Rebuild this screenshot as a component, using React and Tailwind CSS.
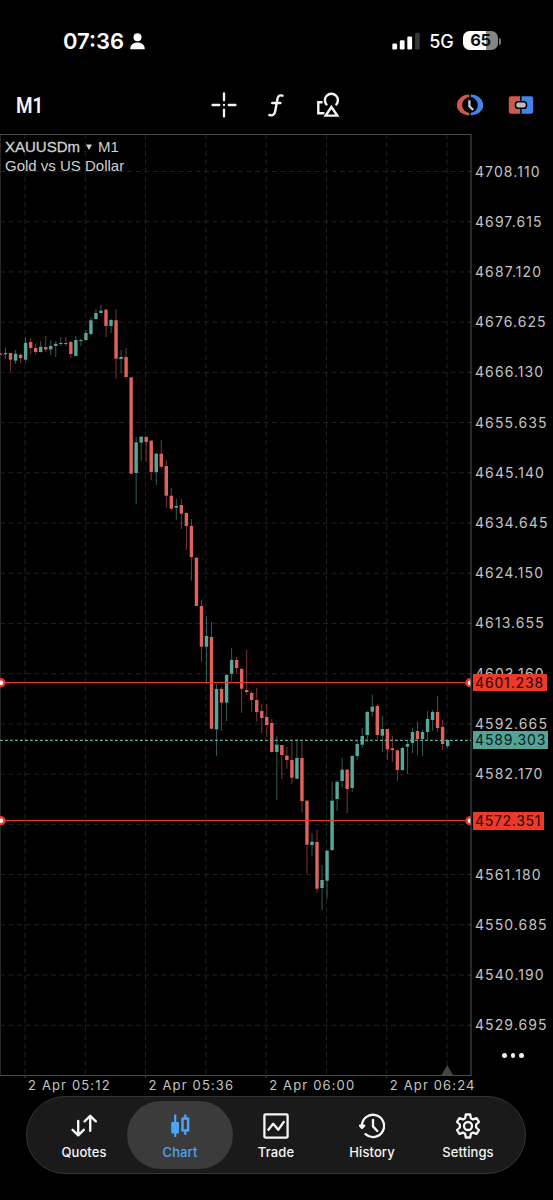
import React from "react";

// Each candle: [body top, body bottom, wick top, wick bottom, rising]
const CANDLES = [
  [353.6, 354.6, 353, 355, 0], [353, 354.2, 347.5, 359, 1], [353, 359.7, 353, 371.3, 0], [353.8, 360.7, 350, 364, 1],
  [354.7, 358, 353.5, 363, 0], [342.8, 359.7, 337, 362.6, 1], [342, 348, 338, 354, 0], [348, 352, 343.5, 354.6, 0],
  [346.8, 352, 341, 352.6, 1], [347, 349.5, 336, 351.7, 0], [346, 349.4, 340, 355, 1], [343.8, 346, 341.5, 357, 1],
  [343, 344, 337, 346, 1], [343, 344, 337, 346, 0], [342, 354, 341, 358, 0], [340, 356, 336, 356, 1],
  [340, 341, 338.6, 346, 1], [333, 340, 330, 340.6, 1], [320.3, 334, 317, 335, 1], [313, 319, 309, 320, 1],
  [310.7, 313, 304.7, 313, 1], [309.7, 326, 309, 337, 0], [320, 326, 319, 333, 1], [320.3, 358.7, 309, 379, 0],
  [357, 359, 350, 372.7, 1], [357, 377, 348, 378.7, 0], [377.3, 473.7, 377.3, 473.7, 0], [442.3, 473, 437, 504, 1],
  [436.7, 442.7, 436, 460.7, 1], [437, 442, 436, 461, 0], [440.7, 472, 440, 480, 0], [453.7, 472, 453, 485, 1],
  [453.7, 466.7, 440, 468, 0], [466, 495.7, 460, 507.7, 0], [495.7, 508.7, 488, 510.7, 0], [506, 507.7, 498.7, 520, 1],
  [505, 513.7, 499, 529, 0], [513, 526, 511.7, 550, 0], [526, 557, 519, 580.7, 0], [557.7, 606, 557.7, 606, 0],
  [606, 646.7, 600, 661.7, 0], [636, 646.7, 616, 684, 1], [637, 728.7, 622, 729, 0], [689, 729.3, 684, 755.7, 1],
  [689, 702.7, 687, 730.7, 0], [675, 702.7, 674, 721, 1], [660, 673.7, 647.7, 681.7, 1], [660, 668, 657, 674, 0],
  [669, 688.7, 668, 713, 0], [690, 692, 650, 694.7, 0], [693, 700, 691, 712, 0], [700, 712, 688, 721.7, 0],
  [711, 718, 704, 733, 0], [717, 725, 704, 737, 0], [723, 752, 718.7, 752.7, 0], [744.7, 752, 735.7, 800, 1],
  [745, 755, 745, 779, 0], [755.7, 760, 747, 768.7, 0], [760, 777.7, 740.7, 783.7, 0], [758, 778.7, 739, 779, 1],
  [758, 801, 740, 812.7, 0], [800.7, 844.7, 800, 873.7, 0], [841.7, 845, 833, 855.7, 1], [842, 888.7, 830, 892.7, 0],
  [880, 888, 865, 910, 1], [850.7, 880.7, 850, 899, 1], [800.7, 850, 781.7, 851, 1], [782, 799, 780, 811, 1],
  [769.7, 781, 757.7, 787, 1], [769.7, 789, 769, 813, 0], [756, 788, 755, 791.7, 1], [744, 756, 740, 759.7, 1],
  [736, 744.7, 728, 748, 1], [712, 735, 711, 742, 1], [706.7, 711.7, 694.7, 716.7, 1], [706, 735, 704, 739, 0],
  [729, 735.7, 715.7, 752, 1], [729, 749.3, 729, 760, 0], [748.3, 750, 736, 762, 0], [750.3, 770, 750, 780.7, 0],
  [748, 770, 747, 770.7, 1], [744, 746.7, 741, 774, 1], [732, 743, 727.7, 753, 1], [731, 739, 721.7, 755, 0],
  [732, 739, 730, 756, 1], [719, 732, 711, 740, 1], [712, 720, 710, 730.7, 1], [712, 728, 696, 732, 0],
  [727, 744, 719.7, 750, 0], [740, 746, 739.5, 748, 1],
];

const PRICES = [
  "4708.110", "4697.615", "4687.120", "4676.625", "4666.130", "4655.635", "4645.140", "4634.645", "4624.150",
  "4613.655", "4603.160", "4592.665", "4582.170", "", "4561.180", "4550.685", "4540.190", "4529.695",
];
const TIMES = ["2 Apr 05:12", "2 Apr 05:36", "2 Apr 06:00", "2 Apr 06:24"];
const GRID_X = Array.from({ length: 8 }, (_, i) => 25 + i * 60.29);
const GRID_Y = Array.from({ length: 18 }, (_, i) => 171.5 + i * 50.22);

function StatusBar() {
  return (
    <div className="flex h-[82px] shrink-0 items-center justify-between pr-[52px] pl-[63px]">
      <div className="flex items-center gap-[6px]">
        <span className="text-[22px] leading-none font-semibold">07:36</span>
        <svg width="15" height="17" viewBox="0 0 15 17" fill="white">
          <circle cx="7.5" cy="4.2" r="4" />
          <path d="M0.3 16.2C0 12.3 3.2 9.6 7.5 9.6S15 12.3 14.7 16.2Z" />
        </svg>
      </div>
      <div className="flex items-center">
        <svg className="-mt-px" width="28" height="18" viewBox="0 0 28 18" fill="white">
          <rect x="0.3" y="11.5" width="4.8" height="6" rx="1.3" />
          <rect x="7.8" y="8.2" width="4.8" height="9.3" rx="1.3" />
          <rect x="15.3" y="4.5" width="4.8" height="13" rx="1.3" />
          <rect x="23" y="0.8" width="4.8" height="16.7" rx="1.3" fill="#363636" />
        </svg>
        <div className="flex w-[43px] justify-center pt-px text-[18px] leading-none font-medium">5G</div>
        <div className="-mt-px flex h-[19px] w-[35px] items-center justify-center rounded-[6.5px] bg-linear-to-r from-white from-65% to-[#858585] to-65% text-[16.5px] leading-none font-bold tracking-[-0.3px] text-[#111]">
          65
        </div>
        <div className="ml-px h-[7px] w-[2px] rounded-r-full bg-[#777]" />
      </div>
    </div>
  );
}

function Toolbar() {
  return (
    <div className="flex h-[52px] shrink-0 items-start pr-[19px] pl-[16px]">
      <div className="mt-[12px] w-[195px] shrink-0 origin-left scale-x-[0.88] font-['Roboto',sans-serif] text-[21.5px] leading-[24px] font-semibold text-[#f4f4f4]">M1</div>
      <div className="mt-[10px] flex items-center">
        <svg width="26" height="26" viewBox="0 0 26 26" stroke="#f4f4f4" strokeWidth="2.3" strokeLinecap="round">
          <path d="M13 1.5V8.3M13 17.7V24.5M1.5 13H8.3M17.7 13H24.5M13 12.9V13.1" />
        </svg>
        <svg className="ml-[31px]" width="16" height="26" viewBox="0 0 16 26" fill="none" stroke="#f4f4f4" strokeWidth="2.4" strokeLinecap="round">
          <path d="M14.5 3.7C11.7 2.8 10.1 3.8 9.5 6.8L7.2 19.2C6.5 22.8 4.6 24 1.4 23M4.2 11H12.4" />
        </svg>
        <svg className="ml-[32px]" width="25" height="26" viewBox="0 0 25 26" fill="none" stroke="#f4f4f4" strokeWidth="2.4">
          <path d="M6.6 10.2H2.3V21.3H8.4" />
          <path d="M11.2 13.2A6.5 6.5 0 1 1 19.6 13.2" />
          <path d="M15.4 15L21.3 23.6H9.7Z" />
        </svg>
      </div>
      <div className="mt-[12px] ml-auto flex items-center gap-[25px]">
        <svg width="26" height="22" viewBox="0 0 26 22" fill="none">
          <path d="M12.3 0.6A12.6 10.4 0 0 0 12.3 21.4Z" fill="#cb5a4c" />
          <path d="M13.7 0.6A12.6 10.4 0 0 1 13.7 21.4Z" fill="#4285ea" />
          <circle cx="13" cy="11" r="7.9" fill="#000" />
          <path d="M12.4 6.2V12.2L16.2 16" stroke="#c8d0d2" strokeWidth="2.3" />
        </svg>
        <svg width="26" height="20" viewBox="0 0 26 20">
          <path d="M12.2 1.2H3Q0.8 1.2 0.8 3.4V16.6Q0.8 18.8 3 18.8H12.2Z" fill="#cb5a4c" />
          <path d="M13.6 1.2H23Q25.2 1.2 25.2 3.4V16.6Q25.2 18.8 23 18.8H13.6Z" fill="#4285ea" />
          <rect x="7.5" y="6.8" width="11" height="6.4" rx="2.8" fill="#b7bec2" stroke="#050505" strokeWidth="1.6" />
        </svg>
      </div>
    </div>
  );
}

function LevelLine({ y }) {
  return (
    <g clipPath="url(#plot-area)">
      <path d={`M0 ${y}H471`} stroke="#e4382a" strokeWidth="1.3" />
      <circle cx="1" cy={y} r="3.5" fill="white" stroke="#e4382a" strokeWidth="2.4" />
      <circle cx="470" cy={y} r="3.5" fill="white" stroke="#e4382a" strokeWidth="2.4" />
    </g>
  );
}

function Plot() {
  return (
    <svg className="block h-[948px] w-[472px] shrink-0" viewBox="0 134 472 948">
      <clipPath id="plot-area"><rect x="0" y="134" width="470.4" height="942" /></clipPath>
      <g stroke="#1f2225" strokeWidth="1" strokeDasharray="5 3.5">
        {GRID_Y.map((y) => <path key={y} d={`M0 ${y}H471`} />)}
        {GRID_X.map((x) => <path key={x} d={`M${x} 134V1075`} />)}
      </g>
      <path d="M0.5 134V1075" stroke="#242627" />
      <path d="M0 134.4H471V1075.5H0" fill="none" stroke="#4b4b4b" strokeWidth="1.1" />
      <path d="M25 1075V1078M145.6 1075V1078M266.2 1075V1078M386.8 1075V1078" stroke="#444" />
      {GRID_Y.map((y) => <path key={y} d={`M469 ${y}H472`} stroke="#3c3c3c" />)}
      <path d="M441.5 1075L447.2 1065L453 1075Z" fill="#444" />
      {CANDLES.map(([top, bottom, high, low, up], i) => {
        const x = 0.5 + i * 5.024;
        return (
          <g key={i} fill={up ? "#55a99a" : "#e0625b"}>
            <rect x={x - 0.5} y={high} width="1" height={low - high} opacity="0.55" />
            <rect x={x - 1.7} y={top} width="3.4" height={bottom - top} />
          </g>
        );
      })}
      <path d="M0 740.4H471" stroke="#62b5a6" strokeWidth="1.3" strokeDasharray="2.8 2.2" />
      <LevelLine y={682.7} />
      <LevelLine y={820.7} />
    </svg>
  );
}

function Chart() {
  return (
    <div className="relative flex h-[948px] shrink-0">
      <Plot />
      <div className="flex flex-col pt-[12.4px] pl-[3px] text-[14px] tracking-[1.08px] text-[#c4c4c4]">
        {PRICES.map((price, i) => (
          <div key={i} className="flex h-[50.22px] shrink-0 items-center leading-none">{price}</div>
        ))}
      </div>
      <div className="absolute top-[4px] left-[5px] font-['Liberation_Sans',sans-serif] text-[15px] leading-[18.5px] text-[#d0d0d0]">
        <div className="flex items-center">
          <span className="[-webkit-text-stroke:0.3px_#d0d0d0]">XAUUSDm</span>
          <svg className="mx-[6px]" width="6" height="6" viewBox="0 0 6 6"><path d="M0 0.5H6L3 6Z" fill="#d0d0d0" /></svg>
          <span>M1</span>
        </div>
        <div>Gold vs US Dollar</div>
      </div>
      <div className="absolute top-[540px] left-[473px] flex h-[17px] w-[74px] items-center bg-[#ec3929] pl-[2px] text-[14px] leading-none tracking-[0.85px] text-[#260502]">4601.238</div>
      <div className="absolute top-[597px] left-[473px] flex h-[18px] w-[75px] items-center bg-[#53a497] pl-[2px] text-[14px] leading-none tracking-[0.85px] text-[#071b18]">4589.303</div>
      <div className="absolute top-[678px] left-[473px] flex h-[18px] w-[71px] items-center bg-[#ec3929] pl-[2px] text-[14px] leading-none tracking-[0.7px] text-[#260502]">4572.351</div>
      <div className="absolute top-[919px] left-[502px] flex gap-[4px]">
        <span className="size-[4.6px] rounded-full bg-[#eee]" />
        <span className="size-[4.6px] rounded-full bg-[#eee]" />
        <span className="size-[4.6px] rounded-full bg-[#eee]" />
      </div>
    </div>
  );
}

const ICONS = {
  Quotes: (
    <path d="M7.2 8V21.8M1.6 16.8L7.2 22.3L12.8 16.8M19.2 17.8V3M13.6 8.3L19.2 2.8L24.8 8.3" fill="none" strokeWidth="2.4" strokeLinecap="round" strokeLinejoin="round" />
  ),
  Chart: (
    <g>
      <path d="M8.2 1.5V24M18.3 1.5V5M18.3 17.5V21.8" strokeWidth="2.2" />
      <rect x="4.2" y="9" width="7.8" height="11.6" rx="0.8" fill="#4da3f5" stroke="none" />
      <rect x="15.5" y="5.6" width="5.6" height="12" rx="0.4" fill="none" strokeWidth="2.5" />
    </g>
  ),
  Trade: (
    <g fill="none" strokeWidth="2.3" strokeLinejoin="round">
      <rect x="1.4" y="1.4" width="23.2" height="23.2" rx="1" />
      <path d="M4.8 17.5L10.2 10.8L15.2 16.8L21.3 8.2" />
    </g>
  ),
  History: (
    <g fill="none" strokeWidth="2.3" strokeLinecap="round" strokeLinejoin="round">
      <path d="M2.9 13A11.1 11.1 0 1 1 6.5 21.1" />
      <path d="M0.9 12.6H5.2L3 15Z" />
      <path d="M14 6.8V13.4L18.3 18" />
    </g>
  ),
  Settings: (
    <g fill="none" strokeWidth="2.3" strokeLinejoin="round">
      <path d="M10.8 1.5H15.2L15.9 5.2L18 6.4L21.6 5.1L24 9L21.1 11.5V14.5L24 17L21.6 20.9L18 19.6L15.9 20.8L15.2 24.5H10.8L10.1 20.8L8 19.6L4.4 20.9L2 17L4.9 14.5V11.5L2 9L4.4 5.1L8 6.4L10.1 5.2Z" />
      <circle cx="13" cy="13" r="4" />
    </g>
  ),
};

function NavItem({ name, active }) {
  return (
    <div className={active
      ? "-mx-[5px] flex h-[68px] w-[106px] shrink-0 flex-col items-center rounded-full bg-[#3b3b3b] pt-[12px] text-[#4da3f5]"
      : "flex h-[68px] w-[96px] shrink-0 flex-col items-center pt-[12px] text-[#f5f5f5]"}>
      <svg width="26" height="26" viewBox="0 0 26 26" stroke="currentColor">{ICONS[name]}</svg>
      <span className="mt-[5px] text-[13px] leading-[16px] font-medium tracking-[0.1px]">{name}</span>
    </div>
  );
}

export default function App() {
  return (
    <div className="flex h-[1200px] w-[553px] flex-col overflow-hidden bg-black font-['Inter',sans-serif] text-white">
      <StatusBar />
      <Toolbar />
      <Chart />
      <div className="-mt-[4px] flex h-[18px] shrink-0 pl-[28px] text-[13px] leading-[14px] tracking-[1.15px] text-[#c4c4c4]">
        {TIMES.map((time) => <div key={time} className="w-[120.6px] shrink-0 whitespace-nowrap">{time}</div>)}
      </div>
      <div className="ml-[26px] flex h-[78px] w-[500px] shrink-0 items-center justify-center rounded-full border border-[#353535] bg-[#1a1a1a]">
        <NavItem name="Quotes" />
        <NavItem name="Chart" active />
        <NavItem name="Trade" />
        <NavItem name="History" />
        <NavItem name="Settings" />
      </div>
    </div>
  );
}
